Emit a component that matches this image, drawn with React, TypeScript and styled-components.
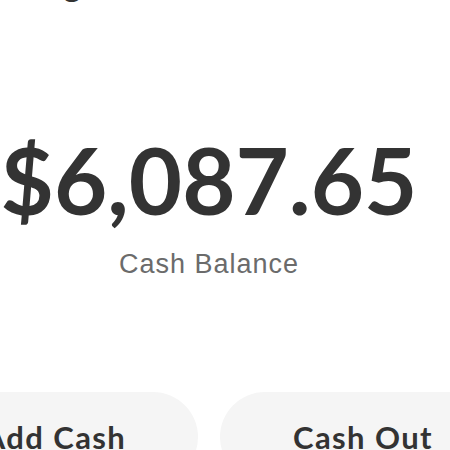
import styled, { createGlobalStyle } from 'styled-components'

const GlobalStyle = createGlobalStyle`
  html, body {
    margin: 0;
    padding: 0;
    background: #ffffff;
    overflow: hidden;
  }
  body {
    font-family: Lato, "Liberation Sans", sans-serif;
  }
`

const Screen = styled.div`
  width: 594px;
  height: 450px;
  margin-left: -88px;
  display: flex;
  flex-direction: column;
  align-items: center;
`

const Header = styled.div`
  align-self: stretch;
  height: 40px;
  margin-top: -36px;
  padding-left: 50px;
  font-size: 33px;
  font-weight: 700;
  color: #333333;
  line-height: 40px;
`

const Balance = styled.div`
  margin-top: 126px;
  font-size: 92px;
  font-weight: 700;
  color: #333333;
  line-height: 100px;
`

const Caption = styled.div`
  margin-top: 18px;
  font-family: "Liberation Sans", Arial, sans-serif;
  font-size: 27px;
  letter-spacing: 1px;
  color: #6b6b6b;
  line-height: 32px;
`

const Actions = styled.div`
  margin-top: 112px;
  display: flex;
  gap: 22px;
`

const ActionButton = styled.button`
  width: 286px;
  height: 90px;
  border: none;
  border-radius: 45px;
  background: #f5f5f5;
  font-family: Lato, "Liberation Sans", sans-serif;
  font-size: 31px;
  font-weight: 700;
  letter-spacing: 1.4px;
  color: #333333;
  display: flex;
  justify-content: center;
  padding-top: 26px;
`

export default function App() {
  return (
    <>
      <GlobalStyle />
      <Screen>
        <Header>Banking</Header>
        <Balance>$6,087.65</Balance>
        <Caption>Cash Balance</Caption>
        <Actions>
          <ActionButton>Add Cash</ActionButton>
          <ActionButton>Cash Out</ActionButton>
        </Actions>
      </Screen>
    </>
  )
}
